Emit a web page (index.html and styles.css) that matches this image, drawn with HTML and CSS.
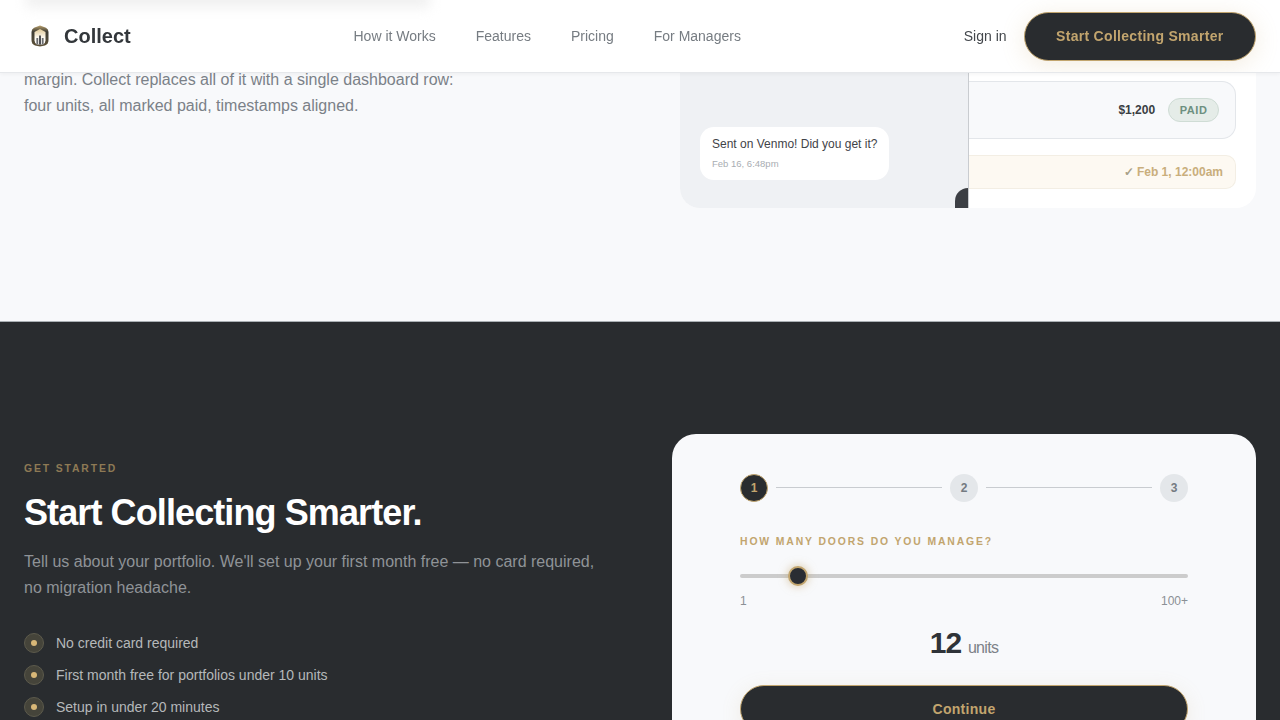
FILE: index.html
```html
<!DOCTYPE html>
<html>
<head>
    <link rel="stylesheet" href="styles.css">
</head>
<body>
    <nav class="navbar">
        <a href="#" class="logo">
            <svg class="logo-mark" width="20" height="24" viewBox="0 0 20 24">
                <defs>
                    <linearGradient id="logoEdge" x1="0" y1="0" x2="0" y2="1">
                        <stop offset="0" stop-color="#b9a06c"/>
                        <stop offset="0.3" stop-color="#3f3d36"/>
                        <stop offset="1" stop-color="#5e5238"/>
                    </linearGradient>
                    <linearGradient id="logoFill" x1="0" y1="0" x2="0" y2="1">
                        <stop offset="0" stop-color="#e0c896"/>
                        <stop offset="0.55" stop-color="#fdf9f0"/>
                        <stop offset="1" stop-color="#ffffff"/>
                    </linearGradient>
                </defs>
                <path d="M10 1.500 L16 3.800 Q18.500 5 18.500 8 V16 Q18.500 20 15 21.500 L10 22.500 L5 21.500 Q1.500 20 1.500 16 V8 Q1.500 5 4 3.800 Z" fill="url(#logoEdge)"/>
                <path d="M10 5 L15.500 8 V16.500 Q15.500 19 13 20.500 H7 Q4.500 19 4.500 16.500 V8 Z" fill="url(#logoFill)"/>
                <rect x="6.400" y="14" width="1.800" height="6.500" fill="#6a6c6f"/>
                <rect x="9.100" y="11.500" width="1.800" height="9" fill="#3c3e42"/>
                <rect x="11.800" y="14" width="1.800" height="6.500" fill="#6a6c6f"/>
            </svg>
            <span class="logo-text">Collect</span>
        </a>
        <div class="nav-links">
            <a href="#">How it Works</a>
            <a href="#">Features</a>
            <a href="#">Pricing</a>
            <a href="#">For Managers</a>
        </div>
        <div class="nav-actions">
            <a href="#" class="sign-in">Sign in</a>
            <a href="#" class="nav-cta">Start Collecting Smarter</a>
        </div>
    </nav>

    <section class="compare-section">
        <div class="compare-copy">
            <p>margin. Collect replaces all of it with a single dashboard row: four units, all marked paid, timestamps aligned.</p>
        </div>
        <div class="compare-card">
            <div class="chat-panel">
                <div class="chat-bubble">
                    <div class="chat-text">Sent on Venmo! Did you get it?</div>
                    <div class="chat-time">Feb 16, 6:48pm</div>
                </div>
                <span class="compare-handle"></span>
            </div>
            <div class="dash-panel">
                <div class="dash-row">
                    <span class="dash-amount">$1,200</span>
                    <span class="paid-badge">PAID</span>
                </div>
                <div class="dash-stamp"><span class="stamp-check">✓</span> Feb 1, 12:00am</div>
            </div>
        </div>
    </section>

    <section class="signup-section">
        <div class="signup-copy">
            <div class="eyebrow">GET STARTED</div>
            <h2>Start Collecting Smarter.</h2>
            <p class="signup-lead">Tell us about your portfolio. We'll set up your first month free — no card required, no migration headache.</p>
            <ul class="perks">
                <li><span class="perk-dot"></span>No credit card required</li>
                <li><span class="perk-dot"></span>First month free for portfolios under 10 units</li>
                <li><span class="perk-dot"></span>Setup in under 20 minutes</li>
            </ul>
        </div>
        <div class="signup-card">
            <div class="steps">
                <span class="step step-active">1</span>
                <span class="step-line"></span>
                <span class="step">2</span>
                <span class="step-line"></span>
                <span class="step">3</span>
            </div>
            <div class="field-label">HOW MANY DOORS DO YOU MANAGE?</div>
            <div class="slider">
                <span class="slider-thumb" style="left: 48px"></span>
            </div>
            <div class="slider-ends">
                <span>1</span>
                <span>100+</span>
            </div>
            <div class="unit-count"><strong>12</strong> units</div>
            <button class="continue-button">Continue</button>
        </div>
    </section>
</body>
</html>
```

FILE: styles.css
```css
* {
    box-sizing: border-box;
}

html,
body {
    height: 720px;
    overflow: hidden;
}

body {
    margin: 0;
    background-color: #f8f9fb;
    font-family: "Liberation Sans", Arial, sans-serif;
    color: #2a2d30;
}

a {
    text-decoration: none;
}

/* Top bar */
.navbar {
    position: fixed;
    top: 0;
    left: 0;
    width: 100%;
    height: 73px;
    padding: 0 24px;
    display: flex;
    justify-content: space-between;
    align-items: center;
    background-color: #ffffff;
    border-bottom: 1px solid #e6e8eb;
    box-shadow: 0 1px 4px rgba(0, 0, 0, 0.05);
    overflow: hidden;
    z-index: 100;
}

/* soft smear of the text scrolled behind the bar */
.navbar::before {
    content: "";
    position: absolute;
    top: -12px;
    left: 26px;
    width: 404px;
    height: 20px;
    background-color: #f1f1f1;
    filter: blur(6px);
}

.logo {
    display: flex;
    align-items: center;
    gap: 8px;
    position: relative;
}

.logo-mark {
    margin: 0 6px;
}

.logo-text {
    font-size: 20px;
    font-weight: bold;
    color: #33373b;
}

.nav-links {
    display: flex;
    gap: 40px;
    font-size: 14px;
}

.nav-links a {
    color: #767c82;
}

.nav-actions {
    display: flex;
    align-items: center;
    gap: 17px;
}

.sign-in {
    font-size: 14px;
    color: #43474c;
}

.nav-cta {
    display: flex;
    align-items: center;
    height: 49px;
    padding: 0 31.5px;
    background-color: #292c2f;
    border: 1.5px solid #c2a56e;
    border-radius: 25px;
    color: #c2a56e;
    font-size: 14px;
    font-weight: bold;
    letter-spacing: 0.3px;
    box-shadow: 0 4px 24px rgba(194, 162, 101, 0.2);
}

/* Chat vs dashboard comparison */
.compare-section {
    display: grid;
    grid-template-columns: 1fr 1fr;
    gap: 80px;
    height: 321px;
    padding: 0 24px;
}

.compare-copy {
    padding-top: 67px;
}

.compare-copy p {
    margin: 0;
    width: 440px;
    font-size: 16px;
    line-height: 26px;
    color: #7b8188;
}

.compare-card {
    display: grid;
    grid-template-columns: 289px 287px;
    height: 208px;
    border-radius: 0 0 20px 20px;
    overflow: hidden;
    background-color: #ffffff;
}

.chat-panel {
    position: relative;
    padding: 127px 0 0 20px;
    background-color: #eff1f4;
    border-right: 1px solid #c9ccd0;
}

.chat-bubble {
    width: 189px;
    height: 53px;
    padding: 10px 12px;
    background-color: #ffffff;
    border-radius: 14px;
}

.chat-text {
    font-size: 12px;
    line-height: 14px;
    white-space: nowrap;
    color: #3f4348;
}

.chat-time {
    margin-top: 7px;
    font-size: 9.5px;
    line-height: 11px;
    color: #a9adb2;
}

.compare-handle {
    position: absolute;
    right: 0;
    bottom: 0;
    width: 13px;
    height: 20px;
    background-color: #3c3f44;
    border-top-left-radius: 13px;
}

.dash-panel {
    padding: 81px 20px 0 0;
}

.dash-row {
    display: flex;
    justify-content: flex-end;
    align-items: center;
    gap: 12px;
    height: 58px;
    padding-right: 16px;
    background-color: #f8f9fb;
    border: 1px solid #e3e6ea;
    border-left: none;
    border-radius: 0 14px 14px 0;
}

.dash-amount {
    margin-right: 1px;
    font-size: 12px;
    font-weight: bold;
    color: #3a3e43;
}

.paid-badge {
    margin-top: -1px;
    padding: 5px 10.5px;
    background-color: #e5ece8;
    border: 1px solid #cfdcd5;
    border-radius: 13px;
    font-size: 11px;
    font-weight: bold;
    letter-spacing: 0.6px;
    color: #6d9080;
}

.dash-stamp {
    height: 34px;
    margin-top: 16px;
    padding-right: 12px;
    background-color: #fdf9f2;
    border: 1px solid #f3eee4;
    border-left: none;
    border-radius: 0 10px 10px 0;
    text-align: right;
    font-size: 12px;
    font-weight: bold;
    line-height: 32px;
    color: #c9ae7c;
}

.stamp-check {
    color: #a8a088;
}

/* Sign up */
.signup-section {
    display: grid;
    grid-template-columns: 1fr 1fr;
    gap: 64px;
    height: 399px;
    padding: 112px 24px 0;
    background-color: #292c2f;
    border-top: 1px solid #aab0b4;
}

.signup-copy {
    padding-top: 28px;
}

.eyebrow {
    font-size: 10.4px;
    font-weight: bold;
    line-height: 14px;
    letter-spacing: 0.18em;
    color: #8e7a55;
}

.signup-copy h2 {
    margin: 15px 0 0;
    font-size: 36px;
    line-height: 44px;
    letter-spacing: -0.9px;
    color: #ffffff;
}

.signup-lead {
    margin: 14px 0 0;
    font-size: 16px;
    line-height: 26px;
    color: #8f9397;
}

.perks {
    list-style: none;
    margin: 32px 0 0;
    padding: 0;
}

.perks li {
    display: flex;
    align-items: center;
    gap: 12px;
    height: 20px;
    margin-bottom: 12px;
    font-size: 14px;
    color: #b5b8ba;
}

.perk-dot {
    display: flex;
    align-items: center;
    justify-content: center;
    width: 20px;
    height: 20px;
    background-color: #45443a;
    border: 1px solid #5c5a4c;
    border-radius: 50%;
}

.perk-dot::after {
    content: "";
    width: 6px;
    height: 6px;
    background-color: #d8b777;
    border-radius: 50%;
}

.signup-card {
    height: 340px;
    padding: 40px 68px;
    background-color: #f8f9fb;
    border-radius: 24px;
}

.steps {
    display: flex;
    align-items: center;
    gap: 8px;
}

.step {
    display: flex;
    align-items: center;
    justify-content: center;
    flex: none;
    width: 28px;
    height: 28px;
    background-color: #e4e7ea;
    border-radius: 50%;
    font-size: 12px;
    font-weight: bold;
    color: #747a81;
}

.step-active {
    background-color: #292c2f;
    border: 1.5px solid #c2a56e;
    color: #c2a56e;
}

.step-line {
    flex: 1;
    height: 1px;
    margin-top: -1px;
    background-color: #c9ccd0;
}

.field-label {
    margin-top: 33px;
    font-size: 10.4px;
    font-weight: bold;
    line-height: 14px;
    letter-spacing: 0.18em;
    color: #c2a56e;
}

.slider {
    position: relative;
    height: 4px;
    margin-top: 25px;
    background-color: #cccccc;
    border-radius: 2px;
}

.slider-thumb {
    position: absolute;
    top: -8px;
    width: 20px;
    height: 20px;
    background-color: #2a2d33;
    border: 2px solid #c2a56e;
    border-radius: 50%;
    box-shadow: 0 0 10px rgba(194, 162, 101, 0.6);
}

.slider-ends {
    display: flex;
    justify-content: space-between;
    margin-top: 16px;
    font-size: 12px;
    line-height: 14px;
    color: #8b9095;
}

.unit-count {
    margin-top: 17px;
    text-align: center;
    font-size: 16px;
    line-height: 36px;
    letter-spacing: -0.7px;
    color: #7c8288;
}

.unit-count strong {
    margin-right: 3px;
    font-size: 30px;
    letter-spacing: -1px;
    color: #2f3338;
}

.continue-button {
    display: block;
    width: 100%;
    height: 48px;
    margin-top: 19px;
    background-color: #292c2f;
    border: 1.5px solid #c2a56e;
    border-radius: 24px;
    font-family: inherit;
    font-size: 14px;
    font-weight: bold;
    letter-spacing: 0.3px;
    color: #c2a56e;
    box-shadow: 0 4px 20px rgba(194, 162, 101, 0.15);
}
```
